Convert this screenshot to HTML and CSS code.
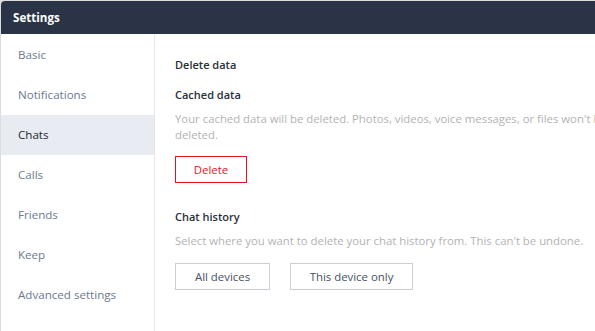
FILE: index.html
```html
<!DOCTYPE html>
<html>
<head>
<meta charset="utf-8">
<link rel="stylesheet" href="styles.css">
</head>
<body>
<div class="window">
  <div class="titlebar">Settings</div>
  <div class="main">
    <nav class="sidebar">
      <div class="nav-item">Basic</div>
      <div class="nav-item">Notifications</div>
      <div class="nav-item active">Chats</div>
      <div class="nav-item">Calls</div>
      <div class="nav-item">Friends</div>
      <div class="nav-item">Keep</div>
      <div class="nav-item">Advanced settings</div>
      <div class="nav-item">Keyboard shortcuts</div>
    </nav>
    <section class="content">
      <div class="section-title">Delete data</div>
      <div class="group">
        <div class="group-title">Cached data</div>
        <p class="desc">Your cached data will be deleted. Photos, videos, voice messages, or files won't be deleted.</p>
        <div class="btn-row">
          <button class="btn btn-danger">Delete</button>
        </div>
      </div>
      <div class="group group-2">
        <div class="group-title">Chat history</div>
        <p class="desc">Select where you want to delete your chat history from. This can't be undone.</p>
        <div class="btn-row">
          <button class="btn btn-all">All devices</button>
          <button class="btn btn-this">This device only</button>
        </div>
      </div>
    </section>
  </div>
</div>
</body>
</html>
```
FILE: styles.css
```css
html, body {
  margin: 0;
  padding: 0;
  height: 100%;
  overflow: hidden;
}
body {
  background: #dcdcdc;
  font-family: "Open Sans", "Noto Sans", sans-serif;
  font-size: 11.35px;
  line-height: 16px;
}
.window {
  margin: 1px 0 0 1px;
  height: 330px;
  background: #fff;
  border-radius: 4px 0 0 0;
  overflow: hidden;
  display: flex;
  flex-direction: column;
}
.titlebar {
  height: 33px;
  flex: none;
  background: #2b3447;
  color: #fff;
  font-weight: 700;
  font-size: 11.6px;
  display: flex;
  align-items: center;
  padding-left: 12px;
}
.main {
  flex: 1;
  display: flex;
  min-height: 0;
}
.sidebar {
  width: 153px;
  flex: none;
  border-right: 1px solid #e6e8eb;
  padding-top: 1px;
}
.nav-item {
  height: 40px;
  display: flex;
  align-items: center;
  padding-left: 17px;
  color: #6c7a8f;
  font-size: 11.6px;
}
.nav-item.active {
  background: #e8ebf1;
  color: #1e2636;
}
.content {
  flex: none;
  width: 450px;
  padding: 23px 0 0 20px;
}
.section-title, .group-title {
  color: #2a2f38;
  font-weight: 600;
  font-size: 11px;
}
.group {
  margin-top: 14px;
}
.group-2 {
  margin-top: 26px;
}
.desc {
  margin: 8px 0 0;
  color: #b3b3b3;
}
.btn-row {
  margin-top: 13px;
  display: flex;
  gap: 20px;
}
.group-2 .btn-row {
  margin-top: 14px;
}
.btn {
  height: 27px;
  padding: 0;
  background: #fff;
  border: 1px solid #c9ced8;
  font-family: inherit;
  font-size: 11.4px;
  color: #46505f;
  cursor: pointer;
}
.btn-danger {
  width: 72px;
  border-color: #e2141c;
  color: #e2141c;
}
.btn-all {
  width: 95px;
}
.btn-this {
  width: 123px;
}
```
